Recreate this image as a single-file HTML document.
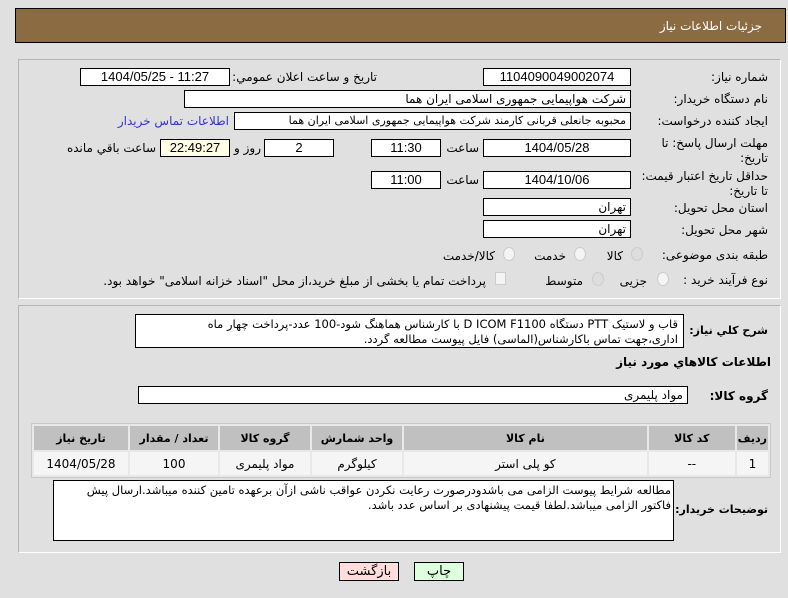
<!DOCTYPE html>
<html><head><meta charset="utf-8"><style>
body{margin:0;width:788px;height:598px;background:#e0e0e0;font-family:"DejaVu Sans","Liberation Sans",sans-serif;font-size:12px;color:#000;position:relative;overflow:hidden}
.a{position:absolute;white-space:nowrap}
.box{position:absolute;background:#fff;border:1px solid #000;box-sizing:border-box;height:18px;line-height:16px;text-align:center;font-size:13px;font-family:"Liberation Sans","DejaVu Sans",sans-serif}
.r{text-align:right;padding-right:4px;direction:rtl;font-family:"DejaVu Sans",sans-serif;font-size:12px;overflow:hidden}
.l{position:absolute;direction:rtl;text-align:right;white-space:nowrap}
.panel{position:absolute;border:1px solid #b4b4b4;border-right-color:#fff;border-bottom-color:#fff;box-sizing:border-box}
.rad{position:absolute;width:10px;height:12px;border:1px solid #ccc;border-radius:50%;background:#f4f4f4}
table{position:absolute;border-collapse:separate;border-spacing:2px;background:#e8e8e8;border:1px solid #c8c8c8;direction:rtl;font-size:12px}
th{background:#c0c0c0;height:22px;font-weight:bold;font-size:11px}
td{background:#f5f5f5;height:21px;text-align:center}
.btn{position:absolute;border:1px solid #000;box-sizing:border-box;height:19px;line-height:17px;text-align:center;font-size:13px}
</style></head><body>
<div class="a" style="left:15px;top:8px;width:771px;height:35px;background:#8b6c42;border:1px solid #000;box-sizing:border-box"></div>
<div class="l" style="right:26px;top:19px;color:#fff;font-size:12px">جزئیات اطلاعات نیاز</div>

<div class="panel" style="left:18px;top:59px;width:763px;height:240px"></div>
<div class="l" style="right:20px;top:70px">شماره نیاز:</div>
<div class="box" style="left:483px;top:68px;width:148px">1104090049002074</div>
<div class="l" style="right:411px;top:70px">تاریخ و ساعت اعلان عمومي:</div>
<div class="box" style="left:80px;top:68px;width:150px">1404/05/25 - 11:27</div>

<div class="l" style="right:20px;top:92px">نام دستگاه خریدار:</div>
<div class="box r" style="left:184px;top:90px;width:447px">شرکت هواپیمایی جمهوری اسلامی ایران هما</div>

<div class="l" style="right:20px;top:114px">ایجاد کننده درخواست:</div>
<div class="box r" style="left:234px;top:112px;width:397px;font-size:11px">محبوبه جانعلی قربانی کارمند شرکت هواپیمایی جمهوری اسلامی ایران هما</div>
<div class="l" style="right:559px;top:114px;color:#3333cc">اطلاعات تماس خریدار</div>

<div class="l" style="right:20px;top:136px;line-height:15px">مهلت ارسال پاسخ: تا<br>تاریخ:</div>
<div class="box" style="left:483px;top:139px;width:148px">1404/05/28</div>
<div class="l" style="right:309px;top:141px">ساعت</div>
<div class="box" style="left:371px;top:139px;width:70px">11:30</div>
<div class="box" style="left:264px;top:139px;width:70px">2</div>
<div class="l" style="right:527px;top:141px">روز و</div>
<div class="box" style="left:160px;top:139px;width:70px;background:#ffffe6">22:49:27</div>
<div class="l" style="right:632px;top:141px">ساعت باقي مانده</div>

<div class="l" style="right:20px;top:169px;line-height:15px">حداقل تاریخ اعتبار قیمت:<br>تا تاریخ:</div>
<div class="box" style="left:483px;top:171px;width:148px">1404/10/06</div>
<div class="l" style="right:309px;top:173px">ساعت</div>
<div class="box" style="left:371px;top:171px;width:70px">11:00</div>

<div class="l" style="right:20px;top:201px">استان محل تحویل:</div>
<div class="box r" style="left:483px;top:198px;width:148px">تهران</div>
<div class="l" style="right:20px;top:223px">شهر محل تحویل:</div>
<div class="box r" style="left:483px;top:220px;width:148px">تهران</div>

<div class="l" style="right:20px;top:248px">طبقه بندی موضوعی:</div>
<div class="rad" style="left:631px;top:247px;background:#ddd"></div>
<div class="l" style="right:165px;top:249px">کالا</div>
<div class="rad" style="left:574px;top:247px"></div>
<div class="l" style="right:222px;top:249px">خدمت</div>
<div class="rad" style="left:503px;top:247px"></div>
<div class="l" style="right:293px;top:249px">کالا/خدمت</div>

<div class="l" style="right:20px;top:273px">نوع فرآیند خرید :</div>
<div class="rad" style="left:657px;top:272px"></div>
<div class="l" style="right:141px;top:274px">جزیی</div>
<div class="rad" style="left:592px;top:272px;background:#ddd"></div>
<div class="l" style="right:205px;top:274px">متوسط</div>
<div class="a" style="left:495px;top:272px;width:9px;height:11px;border:1px solid #ccc;background:#f4f4f4"></div>
<div class="l" style="right:302px;top:274px">پرداخت تمام یا بخشی از مبلغ خرید،از محل "اسناد خزانه اسلامی" خواهد بود.</div>

<div class="panel" style="left:18px;top:305px;width:763px;height:248px"></div>
<div class="l" style="right:20px;top:324px;font-weight:bold;font-size:11px">شرح کلي نیاز:</div>
<div class="a" style="left:135px;top:314px;width:549px;height:34px;background:#fff;border:1px solid #000;box-sizing:border-box"></div>
<div class="l" style="right:110px;top:317px;line-height:15px;font-size:11.5px">قاب و لاستیک PTT دستگاه D ICOM F1100 با کارشناس هماهنگ شود-100 عدد-پرداخت چهار  ماه<br>اداری،جهت تماس باکارشناس(الماسی) فایل پیوست مطالعه گردد.</div>
<div class="l" style="right:17px;top:355px;font-weight:bold">اطلاعات کالاهاي مورد نیاز</div>
<div class="l" style="right:20px;top:389px;font-weight:bold">گروه کالا:</div>
<div class="box r" style="left:138px;top:386px;width:550px">مواد پلیمری</div>

<table style="left:31px;top:423px;width:740px">
<tr><th style="width:22px">ردیف</th><th style="width:84px">کد کالا</th><th>نام کالا</th><th style="width:88px">واحد شمارش</th><th style="width:88px">گروه کالا</th><th style="width:86px">تعداد / مقدار</th><th style="width:92px">تاریخ نیاز</th></tr>
<tr><td>1</td><td>--</td><td>کو پلی استر</td><td>کیلوگرم</td><td>مواد پلیمری</td><td>100</td><td>1404/05/28</td></tr>
</table>

<div class="l" style="right:20px;top:503px;font-weight:bold;font-size:11px">توضیحات خریدار:</div>
<div class="a" style="left:53px;top:480px;width:621px;height:61px;background:#fff;border:1px solid #000;box-sizing:border-box"></div>
<div class="l" style="right:117px;top:483px;line-height:15px;font-size:11.5px">مطالعه شرایط پیوست الزامی می باشدودرصورت رعایت نکردن عواقب ناشی ازآن برعهده تامین کننده میباشد.ارسال پیش<br>فاکتور الزامی میباشد.لطفا قیمت پیشنهادی بر اساس عدد باشد.</div>

<div class="btn" style="left:339px;top:562px;width:60px;background:#fdd">بازگشت</div>
<div class="btn" style="left:414px;top:562px;width:50px;background:#dfd">چاپ</div>
</body></html>
